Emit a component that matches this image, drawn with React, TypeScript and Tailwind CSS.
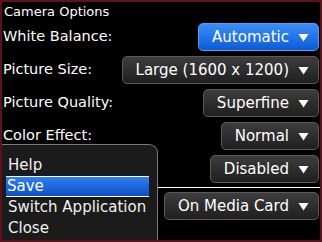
import React from "react";

const Tri = () => (
  <svg width="11" height="9" viewBox="0 0 11 9" className="shrink-0">
    <path d="M0.5 1 L10.5 1 L5.5 8.5 Z" fill="#ffffff" />
  </svg>
);

const Btn = ({ label, blue }: { label: string; blue?: boolean }) => (
  <div
    className={
      "h-[28px] flex items-center gap-[9px] pl-[13px] pr-[9px] rounded-[5px] border text-[15px] text-white " +
      (blue
        ? "border-[#5b9cf2] bg-gradient-to-b from-[#3a8ef7] to-[#0a5ad6]"
        : "border-[#5a5a5a] bg-gradient-to-b from-[#3d3d3d] to-[#1f1f1f]")
    }
  >
    <span className="leading-none whitespace-nowrap">{label}</span>
    <Tri />
  </div>
);

const Row = ({ label, value, blue }: { label?: string; value: string; blue?: boolean }) => (
  <div className="flex items-center justify-between pr-[1px]">
    <span className="text-[14.5px] text-white whitespace-nowrap">{label ?? ""}</span>
    <Btn label={value} blue={blue} />
  </div>
);

export default function App() {
  return (
    <div
      className="relative w-[322px] h-[242px] overflow-hidden bg-black border-l-2 border-r-2 border-t-2 border-b-2 border-[#5b1219]"
      style={{ fontFamily: '"DejaVu Sans", sans-serif' }}
    >
      <div className="pl-[2px] pt-[1px] text-[13px] leading-[18px] text-white">Camera Options</div>
      <div className="flex flex-col gap-[5px] pt-[2px] pl-[1px]">
        <Row label="White Balance:" value="Automatic" blue />
        <Row label="Picture Size:" value="Large (1600 x 1200)" />
        <Row label="Picture Quality:" value="Superfine" />
        <Row label="Color Effect:" value="Normal" />
        <Row value="Disabled" />
      </div>
      <div className="mt-[4px] h-[1px] bg-white" />
      <div className="mt-[4px] pl-[1px]">
        <Row value="On Media Card" />
      </div>

      <div className="absolute left-0 top-[142px] w-[156px] h-[110px] bg-[#1b1b1b] border-t border-r border-[#7a7a7a] rounded-tr-[9px] pt-[10px] text-[15px] leading-[21px] text-[#f0f0f0]">
        <div className="pl-[6px]">Help</div>
        <div className="ml-[4px] mr-[8px] border-t border-b border-white bg-gradient-to-b from-[#2f7ff0] to-[#0b4fc4] pl-[1px] text-white leading-[19px]">
          Save
        </div>
        <div className="pl-[6px] whitespace-nowrap">Switch Application</div>
        <div className="pl-[6px] leading-[20px]">Close</div>
      </div>
    </div>
  );
}
